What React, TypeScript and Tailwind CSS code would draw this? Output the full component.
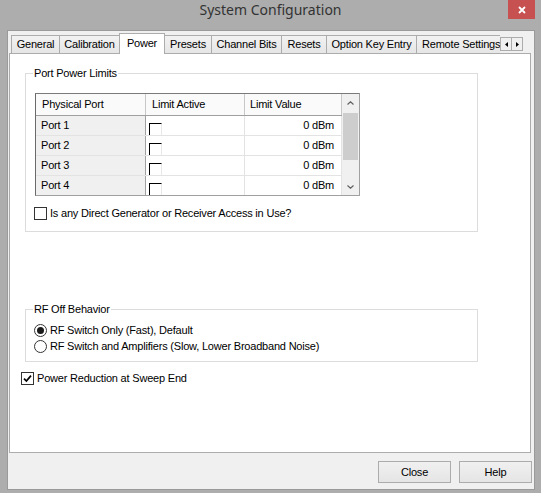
import React from "react";

const tabs = [
  { label: "General", w: "w-[49px]" },
  { label: "Calibration", w: "w-[61px]" },
  { label: "Power", w: "w-[46px]", active: true },
  { label: "Presets", w: "w-[48px]" },
  { label: "Channel Bits", w: "w-[71px]" },
  { label: "Resets", w: "w-[46px]" },
  { label: "Option Key Entry", w: "w-[91px]" },
];

const ports = ["Port 1", "Port 2", "Port 3", "Port 4"];

function CheckBox({ checked = false }: { checked?: boolean }) {
  return (
    <span className="w-[13px] h-[13px] shrink-0 border border-[#333333] bg-white flex items-center justify-center">
      {checked && (
        <svg width="9" height="9" viewBox="0 0 9 9">
          <path d="M1 4.6L3.4 7L8 1.6" fill="none" stroke="#000" strokeWidth="1.7" />
        </svg>
      )}
    </span>
  );
}

function Radio({ on = false }: { on?: boolean }) {
  return (
    <span className="w-[13px] h-[13px] shrink-0 rounded-full border border-[#333333] bg-white flex items-center justify-center">
      {on && <span className="w-[7px] h-[7px] rounded-full bg-[#1a1a1a]" />}
    </span>
  );
}

// grid checkbox: flat sunken box, bottom edge cut by the row line
function GridCheck() {
  return <span className="block w-[13px] h-[12px] border-t border-l border-black border-r border-r-[#e8e8e8]" />;
}

export default function App() {
  return (
    <div className="w-[541px] h-[493px] bg-[#adadad] flex flex-col font-['Liberation_Sans',Arial,sans-serif] text-[11px] leading-[13px] tracking-[-0.2px] text-black">
      {/* title bar */}
      <div className="relative h-[30px] shrink-0 flex justify-center pt-[1px]">
        <span className="font-['Noto_Sans',sans-serif] text-[14px] leading-[18px] tracking-normal text-[#333333]">
          System Configuration
        </span>
        <div className="absolute top-0 right-[6px] w-[27px] h-[19px] bg-[#c75050] flex items-center justify-center">
          <svg width="8" height="8" viewBox="0 0 8 8">
            <path d="M1 1L7 7M7 1L1 7" stroke="white" strokeWidth="1.8" />
          </svg>
        </div>
      </div>

      <div className="ml-[7px] mr-[6px] h-[460px] border border-[#9a9a9a] bg-[#f0f0f0] flex flex-col pt-[2px]">
        {/* tabs */}
        <div className="flex items-end h-[20px] ml-[3px]">
          {tabs.map((t, i) =>
            t.active ? (
              <div
                key={t.label}
                className={`${t.w} h-[21px] -mb-px -ml-px relative z-10 bg-white border border-b-0 border-[#acacac] flex justify-center pt-[3px]`}
              >
                {t.label}
              </div>
            ) : (
              <div
                key={t.label}
                className={`${t.w} h-[18px] ${i === 0 ? "" : "-ml-px"} border border-b-0 border-[#acacac] bg-linear-to-b from-[#f2f2f2] to-[#e6e6e6] flex items-center justify-center whitespace-nowrap`}
              >
                {t.label}
              </div>
            )
          )}
          <div className="w-[84px] h-[18px] -ml-px border-l border-t border-[#acacac] bg-linear-to-b from-[#f2f2f2] to-[#e6e6e6] overflow-hidden whitespace-nowrap pl-[5px] flex items-center">
            Remote Settings
          </div>
          <div className="flex self-start mt-[4px]">
            <div className="w-[12px] h-[14px] border border-[#acacac] bg-[#f0f0f0] flex items-center justify-center">
              <svg width="3" height="5" viewBox="0 0 3 5">
                <polygon points="3,0 3,5 0,2.5" fill="#000" />
              </svg>
            </div>
            <div className="w-[12px] h-[14px] -ml-px border border-[#acacac] bg-[#f0f0f0] flex items-center justify-center">
              <svg width="3" height="5" viewBox="0 0 3 5">
                <polygon points="0,0 0,5 3,2.5" fill="#000" />
              </svg>
            </div>
          </div>
        </div>

        {/* tab page */}
        <div className="ml-[1px] mr-[3px] h-[400px] bg-white border border-[#acacac] pl-[11px] pt-[12px] flex flex-col items-start">
          <fieldset className="ml-[4px] w-[453px] border border-[#dcdcdc] px-[8px] pb-[11px]">
            <legend className="px-[1px] -ml-[1px] leading-[14px]">Port Power Limits</legend>

            <div className="mt-[13px] ml-[1px] w-[325px] h-[103px] border border-[#a0a0a0] border-t-[#7a7a7a] border-l-[#6a6a6a] flex">
              <div className="w-[306px] flex flex-col">
                <div className="flex h-[22px] border-b border-[#a0a0a0] bg-[#fafafa]">
                  <div className="w-[110px] border-r border-[#c8c8c8] pl-[6px] flex items-center">Physical Port</div>
                  <div className="w-[99px] border-r border-[#c8c8c8] pl-[6px] flex items-center">Limit Active</div>
                  <div className="w-[97px] border-r border-[#c8c8c8] pl-[5px] flex items-center">Limit Value</div>
                </div>
                {ports.map((p, i) => (
                  <div
                    key={p}
                    className={`flex ${i === 3 ? "h-[19px]" : "h-[20px] border-b border-[#e3e3e3]"}`}
                  >
                    <div className="w-[110px] bg-[#f0f0f0] border-r border-[#a0a0a0] pl-[5px] flex items-center">{p}</div>
                    <div className="w-[99px] border-r border-[#e3e3e3] pl-[3px] pt-[7px]">
                      <GridCheck />
                    </div>
                    <div className="w-[97px] border-r border-[#e3e3e3] pr-[7px] flex items-center justify-end">0 dBm</div>
                  </div>
                ))}
              </div>
              {/* scrollbar */}
              <div className="w-[17px] bg-[#f0f0f0] flex flex-col">
                <div className="h-[17px] flex items-center justify-center">
                  <svg width="7" height="4" viewBox="0 0 7 4">
                    <polyline points="0.5,3.5 3.5,0.8 6.5,3.5" fill="none" stroke="#606060" strokeWidth="1.2" />
                  </svg>
                </div>
                <div className="mt-[2px] mx-[1px] h-[47px] bg-[#cdcdcd]" />
                <div className="flex-1" />
                <div className="h-[17px] flex items-center justify-center">
                  <svg width="7" height="4" viewBox="0 0 7 4">
                    <polyline points="0.5,0.5 3.5,3.2 6.5,0.5" fill="none" stroke="#606060" strokeWidth="1.2" />
                  </svg>
                </div>
              </div>
            </div>

            <div className="mt-[11px] flex items-center gap-[3px]">
              <CheckBox />
              <span>Is any Direct Generator or Receiver Access in Use?</span>
            </div>
          </fieldset>

          <fieldset className="mt-[70px] ml-[4px] w-[453px] border border-[#dcdcdc] px-[8px] pb-[8px]">
            <legend className="px-[1px] -ml-[1px] leading-[14px]">RF Off Behavior</legend>
            <div className="mt-[8px] flex items-center gap-[3px]">
              <Radio on />
              <span>RF Switch Only (Fast), Default</span>
            </div>
            <div className="mt-[3px] flex items-center gap-[3px]">
              <Radio />
              <span>RF Switch and Amplifiers (Slow, Lower Broadband Noise)</span>
            </div>
          </fieldset>

          <div className="mt-[10px] flex items-center gap-[3px]">
            <CheckBox checked />
            <span>Power Reduction at Sweep End</span>
          </div>
        </div>

        {/* dialog buttons */}
        <div className="flex justify-end gap-[8px] mt-[8px] mr-[2px]">
          <button className="w-[73px] h-[22px] border border-[#acacac] bg-linear-to-b from-[#f0f0f0] to-[#e5e5e5]">Close</button>
          <button className="w-[73px] h-[22px] border border-[#acacac] bg-linear-to-b from-[#f0f0f0] to-[#e5e5e5]">Help</button>
        </div>
      </div>
    </div>
  );
}
